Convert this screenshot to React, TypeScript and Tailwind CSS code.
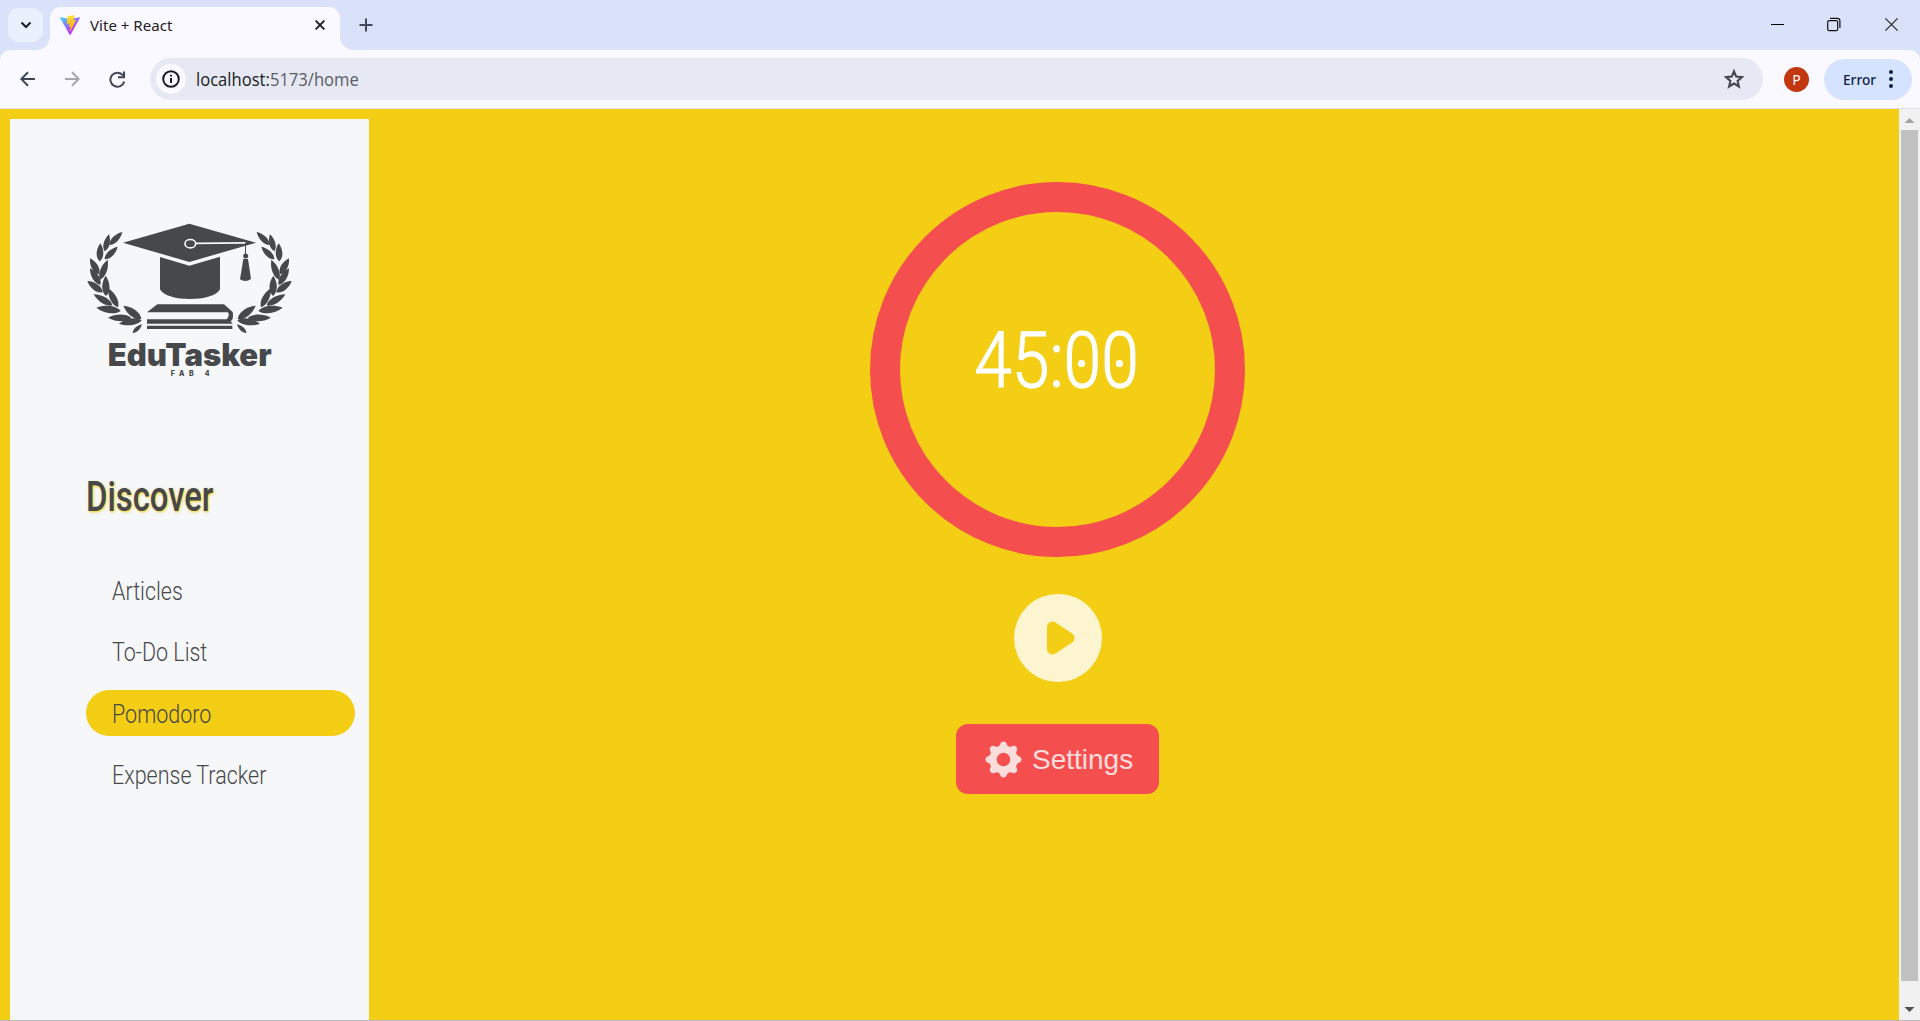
import React from "react";

const leaves: [number, number, number, number, number][] = [
  [88, 105, 127, 66, 9],
  [74, 124, 87, 73, 9],
  [74, 148, 113, 110, 9],
  [59, 154, 61, 100, 10],
  [60, 209, 83, 149, 10],
  [57, 193, 30, 145, 10],
  [61, 225, 30, 175, 10],
  [68, 247, 22, 213, 10],
  [78, 258, 77, 197, 11],
  [97, 286, 41, 253, 10],
  [114, 292, 84, 234, 10],
  [122, 303, 49, 293, 11],
  [184, 327, 130, 287, 11],
  [154, 324, 84, 323, 10],
  [185, 331, 117, 341, 10],
  [158, 369, 186, 343, 6],
];

function leafPath([x1, y1, x2, y2, w]: [number, number, number, number, number]) {
  const dx = x2 - x1;
  const dy = y2 - y1;
  const len = Math.hypot(dx, dy);
  const nx = (-dy / len) * w * 1.33;
  const ny = (dx / len) * w * 1.33;
  const at = (t: number, s: number) => `${x1 + dx * t + nx * s} ${y1 + dy * t + ny * s}`;
  return `M${x1} ${y1}C${at(0.2, 1)} ${at(0.65, 1)} ${x2} ${y2}C${at(0.65, -1)} ${at(0.2, -1)} ${x1} ${y1}Z`;
}

function Logo() {
  const wreath = leaves.map((l, i) => <path key={i} d={leafPath(l)} />);
  return (
    <svg className="block h-[175px] w-[220px] fill-[#47484b]" viewBox="0 0 660 525">
      <g>{wreath}</g>
      <g transform="translate(657 0) scale(-1 1)">{wreath}</g>
      <path d="M240 141L328 167L420 140V238C402 277 258 277 240 238Z" />
      <path d="M129 98L328 41L528 98L328 156Z" />
      <ellipse cx="331" cy="101" rx="16" ry="12.500" fill="none" stroke="#f6f7f9" strokeWidth="5" />
      <path d="M347 97.500L497 96V101L347 103Z" fill="#f6f7f9" />
      <path d="M495 98h3v35h-3z" />
      <circle cx="497" cy="138" r="7.500" />
      <path d="M490 147H504L513 207Q497 218 480 208Z" />
      <path d="M232 283H432L458 306Q462 328 452 334L458 341H201V328H440Q450 318 444 307H201Z" />
      <path d="M201 347h256v10H201z" />
      <text x="83" y="467" textLength="492" lengthAdjust="spacingAndGlyphs" className="font-['Inter'] text-[93px] font-black">EduTasker</text>
      <text x="272" y="498" textLength="117" className="font-['Inter'] text-[21px] font-extrabold">FAB 4</text>
    </svg>
  );
}

function ViteIcon() {
  return (
    <svg className="ml-[10px] h-5 w-5" viewBox="0 0 256 257">
      <defs>
        <linearGradient id="va" x1="-.828%" x2="57.636%" y1="7.652%" y2="78.411%"><stop offset="0%" stopColor="#41D1FF" /><stop offset="100%" stopColor="#BD34FE" /></linearGradient>
        <linearGradient id="vb" x1="43.376%" x2="50.316%" y1="2.242%" y2="89.030%"><stop offset="0%" stopColor="#FFEA83" /><stop offset="8.333%" stopColor="#FFDD35" /><stop offset="100%" stopColor="#FFA800" /></linearGradient>
      </defs>
      <path fill="url(#va)" d="M255.153 37.938L134.897 252.976c-2.483 4.440-8.862 4.466-11.382.048L.875 37.958c-2.746-4.814 1.371-10.646 6.827-9.670l120.385 21.517a6.537 6.537 0 0 0 2.322-.004l117.867-21.483c5.438-.991 9.574 4.796 6.877 9.620Z" />
      <path fill="url(#vb)" d="M185.432.063L96.440 17.501a3.268 3.268 0 0 0-2.634 3.014l-5.474 92.456a3.268 3.268 0 0 0 3.997 3.378l24.777-5.718c2.318-.535 4.413 1.507 3.936 3.838l-7.361 36.047c-.495 2.426 1.782 4.500 4.151 3.780l15.304-4.649c2.372-.720 4.652 1.360 4.150 3.788l-11.698 56.621c-.732 3.542 3.979 5.473 5.943 2.437l1.313-2.028l72.516-144.720c1.215-2.423-.880-5.186-3.540-4.672l-25.505 4.922c-2.396.462-4.435-1.770-3.759-4.114l16.646-57.705c.677-2.350-1.370-4.583-3.769-4.113Z" />
    </svg>
  );
}

function Flare({ flip = false }: { flip?: boolean }) {
  return (
    <svg className={flip ? "h-[14px] w-[14px] -scale-x-100 self-end fill-[#faf9ff]" : "h-[14px] w-[14px] self-end fill-[#faf9ff]"} viewBox="0 0 14 14">
      <path d="M14 0V14H0C8 14 14 8 14 0Z" />
    </svg>
  );
}

function TabStrip() {
  return (
    <div className="flex h-[50px] bg-[#dae2fa]">
      <div className="mt-2 ml-2 flex h-[34px] w-[35px] shrink-0 items-center justify-center rounded-[11px] bg-[#ebf0fe]">
        <svg className="h-3 w-3" viewBox="0 0 12 12" fill="none" stroke="#1c1d22" strokeWidth="2"><path d="M1.500 3.500L6 8L10.500 3.500" /></svg>
      </div>
      <div className="-ml-[7px] flex">
        <Flare />
        <div className="mt-[7px] flex w-[290px] items-center rounded-t-[11px] bg-[#faf9ff] pb-2">
          <ViteIcon />
          <span className="ml-[10px] w-[225px] pt-px font-['Noto_Sans'] text-[15px] text-[#1f2024]"><span className="inline-block origin-left scale-x-[1.005] whitespace-nowrap">Vite + React</span></span>
          <svg className="h-[10px] w-[10px]" viewBox="0 0 10 10" stroke="#1c1d22" strokeWidth="1.900"><path d="M.6 .6L9.400 9.400M9.400 .6L.6 9.400" /></svg>
        </div>
        <Flare flip />
      </div>
      <svg className="mt-[18px] ml-[5px] h-[14px] w-[14px]" viewBox="0 0 14 14" stroke="#454957" strokeWidth="2"><path d="M7 .5V13.500M.5 7H13.500" /></svg>
      <div className="ml-auto flex pt-[17px]">
        <svg className="mr-[43px] h-[15px] w-[13px]" viewBox="0 0 13 15"><path d="M0 7h13v1H0z" /></svg>
        <svg className="mr-[44px] h-[15px] w-[14px]" viewBox="0 0 14 15" fill="none" stroke="#111" strokeWidth="1.200"><rect x=".7" y="3.700" width="10" height="10" rx="1.500" /><path d="M3 1.400H10.500Q12.900 1.400 12.900 3.800V11" /></svg>
        <svg className="mr-[22px] h-[15px] w-[13px]" viewBox="0 0 13 15" stroke="#222" strokeWidth="1.200"><path d="M.4 1.400L12.600 13.600M12.600 1.400L.4 13.600" /></svg>
      </div>
    </div>
  );
}

function Toolbar() {
  return (
    <div className="bg-[#dae2fa]">
      <div className="flex h-[59px] items-center rounded-t-[10px] border-b border-[#dfe0ea] bg-[#faf9ff]">
        <svg className="ml-5 h-4 w-[15px]" viewBox="0 0 15 16" fill="none" stroke="#3f4653" strokeWidth="2"><path d="M15 8H1.500M8 1.200L1.300 8L8 14.800" /></svg>
        <svg className="ml-[30px] h-4 w-[15px]" viewBox="0 0 15 16" fill="none" stroke="#a7a8ae" strokeWidth="2"><path d="M0 8H13.500M7 1.200L13.700 8L7 14.800" /></svg>
        <svg className="ml-[29px] h-[17px] w-[17px]" viewBox="0 0 17 17" fill="none" stroke="#3f4653" strokeWidth="2"><path d="M14 4.500A7 7 0 1 0 15.200 10.500M15 .5V6.200H9" /></svg>
        <div className="ml-6 flex h-[42px] w-[1613px] items-center rounded-full bg-[#e6e8f3]">
          <div className="ml-1.5 flex h-[30px] w-[30px] items-center justify-center rounded-full bg-[#faf9ff]">
            <svg className="h-[18px] w-[18px]" viewBox="0 0 18 18" fill="none" stroke="#1c1d22" strokeWidth="2"><circle cx="9" cy="9" r="7.800" /><path d="M9 8V13M9 4.700V6.500" /></svg>
          </div>
          <span className="ml-[10px] font-['Open_Sans'] text-[18px] text-[#202226]"><span className="inline-block origin-left scale-x-[0.922] whitespace-nowrap">localhost:<span className="text-[#5a5d65]">5173/home</span></span></span>
          <svg className="mr-[19px] ml-auto h-5 w-5" viewBox="0 0 20 20" fill="none" stroke="#454850" strokeWidth="2.100"><path d="M10 2.300L12.200 7.600L18 8.100L13.600 11.900L14.900 17.500L10 14.500L5.100 17.500L6.400 11.900L2 8.100L7.800 7.600Z" /></svg>
        </div>
        <div className="ml-[21px] flex h-[25px] w-[25px] items-center justify-center rounded-full bg-[#c23610] font-['Noto_Sans'] text-[14px] text-white">P</div>
        <div className="ml-[15px] flex h-[41px] w-[88px] items-center rounded-full bg-[#d6e3ff] pl-[19px]">
          <span className="w-[46px] font-['Noto_Sans'] text-[15px] text-[#0c2148]"><span className="inline-block origin-left scale-x-[0.910] font-medium">Error</span></span>
          <svg className="h-[18px] w-1 fill-[#0c2148]" viewBox="0 0 4 18"><circle cx="2" cy="2" r="2" /><circle cx="2" cy="9" r="2" /><circle cx="2" cy="16" r="2" /></svg>
        </div>
      </div>
    </div>
  );
}

function Sidebar() {
  const item = "flex h-[46px] w-[269px] items-center rounded-full pt-[3px] pl-[26px]";
  const label = "inline-block origin-left whitespace-nowrap scale-x-[0.826]";
  return (
    <aside className="mt-[10px] ml-[10px] w-[359px] shrink-0 bg-[#f6f7f9] pt-[91px] text-[#47484b]">
      <div className="pl-[70px]"><Logo /></div>
      <h1 className="mt-[85px] ml-[76px] h-[52px] font-['Roboto'] text-[43px] leading-[52px] font-medium [text-shadow:1px_1px_3px_#f4ce14]">
        <span className="inline-block origin-left scale-x-[0.763]">Discover</span>
      </h1>
      <nav className="mt-[45px] ml-[76px] flex flex-col gap-[15.300px] font-['Roboto'] text-[26px] font-light">
        <a className={item}><span className={label}>Articles</span></a>
        <a className={item}><span className={label}>To-Do List</span></a>
        <a className={`${item} bg-[#f4ce14]`}><span className={label}>Pomodoro</span></a>
        <a className={item}><span className={label}>Expense Tracker</span></a>
      </nav>
    </aside>
  );
}

function Timer() {
  return (
    <main className="flex w-[1377px] shrink-0 flex-col items-center pt-[73px]">
      <div className="flex h-[375px] w-[375px] items-center justify-center rounded-full border-[30px] border-[#f54e4e]">
        <div className="-mt-[16px] mr-[2px] font-['Roboto'] text-[77px] leading-none font-light text-white [-webkit-text-stroke:1.200px_white]">
          <span className="relative inline-block scale-x-[0.880]">
            45:00
            <span className="absolute top-[37px] right-[18.500px] h-[7px] w-2 rounded-full bg-white" />
            <span className="absolute top-[37px] right-[61.500px] h-[7px] w-2 rounded-full bg-white" />
          </span>
        </div>
      </div>
      <svg className="mt-[26px] h-[110px] w-[110px] fill-white/80" viewBox="0 0 20 20"><path fillRule="evenodd" d="M10 18a8 8 0 100-16 8 8 0 000 16zM9.555 7.168A1 1 0 008 8v4a1 1 0 001.555.832l3-2a1 1 0 000-1.664l-3-2z" /></svg>
      <button className="mt-[31px] flex h-[70px] w-[203px] items-center rounded-xl bg-[#f54e4e] pl-[25px] font-['Liberation_Sans'] text-[28px] text-white/80">
        <svg className="h-[45px] w-[45px] shrink-0" viewBox="0 0 20 20" fill="currentColor"><path fillRule="evenodd" d="M11.490 3.170c-.380-1.560-2.600-1.560-2.980 0a1.532 1.532 0 01-2.286.948c-1.372-.836-2.942.734-2.106 2.106.540.886.061 2.042-.947 2.287-1.561.379-1.561 2.600 0 2.978a1.532 1.532 0 01.947 2.287c-.836 1.372.734 2.942 2.106 2.106a1.532 1.532 0 012.287.947c.379 1.561 2.600 1.561 2.978 0a1.533 1.533 0 012.287-.947c1.372.836 2.942-.734 2.106-2.106a1.533 1.533 0 01.947-2.287c1.561-.379 1.561-2.600 0-2.978a1.532 1.532 0 01-.947-2.287c.836-1.372-.734-2.942-2.106-2.106a1.532 1.532 0 01-2.287-.947zM10 13a3 3 0 100-6 3 3 0 000 6z" /></svg>
        <span className="ml-[6px] pt-px">Settings</span>
      </button>
    </main>
  );
}

function Scrollbar() {
  return (
    <div className="ml-auto flex w-[21px] flex-col items-center bg-[#f1f1f1]">
      <svg className="h-[21px] w-[21px] fill-[#a3a3a3]" viewBox="0 0 21 21"><path d="M5.500 14L10.500 9L15.500 14Z" /></svg>
      <div className="mr-px h-[851px] w-[17px] bg-[#c1c1c1]" />
      <svg className="mt-[19px] h-[20px] w-[21px] fill-[#505050]" viewBox="0 0 21 20"><path d="M5.500 7L10.500 12L15.500 7Z" /></svg>
    </div>
  );
}

export default function App() {
  return (
    <div className="flex h-[1021px] w-[1920px] flex-col overflow-hidden border-b border-[#b9b9bd] bg-[#f4ce14]">
      <TabStrip />
      <Toolbar />
      <div className="flex min-h-0 flex-1">
        <Sidebar />
        <Timer />
        <Scrollbar />
      </div>
    </div>
  );
}
